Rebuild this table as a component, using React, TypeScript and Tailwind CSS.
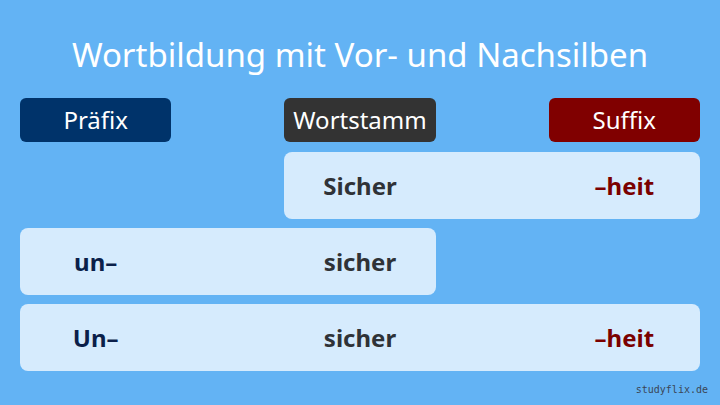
const font = { fontFamily: '"Noto Sans", "Open Sans", sans-serif' };

type Row = {
  start: 'col-start-1' | 'col-start-2';
  span: 'col-span-2' | 'col-span-3';
  cols: 'grid-cols-2' | 'grid-cols-3';
  words: { text: string; color: string }[];
};

const rows: Row[] = [
  {
    start: 'col-start-2',
    span: 'col-span-2',
    cols: 'grid-cols-2',
    words: [
      { text: 'Sicher', color: 'text-[#2f3237]' },
      { text: '–heit', color: 'text-[#7a0000]' },
    ],
  },
  {
    start: 'col-start-1',
    span: 'col-span-2',
    cols: 'grid-cols-2',
    words: [
      { text: 'un–', color: 'text-[#0b1f4a]' },
      { text: 'sicher', color: 'text-[#2f3237]' },
    ],
  },
  {
    start: 'col-start-1',
    span: 'col-span-3',
    cols: 'grid-cols-3',
    words: [
      { text: 'Un–', color: 'text-[#0b1f4a]' },
      { text: 'sicher', color: 'text-[#2f3237]' },
      { text: '–heit', color: 'text-[#7a0000]' },
    ],
  },
];

export default function App() {
  return (
    <div className="relative w-[720px] h-[405px] bg-[#63b3f4] overflow-hidden" style={font}>
      <h1 className="pt-[33px] h-[98px] text-center text-white text-[33px] leading-[44px]">
        Wortbildung mit Vor- und Nachsilben
      </h1>

      <div className="grid grid-cols-3 gap-x-[113px] gap-y-[9px] px-5">
        <div className="h-[44px] rounded-md bg-[#00336a] text-white text-[24px] flex items-center justify-center">
          Präfix
        </div>
        <div className="h-[44px] rounded-md bg-[#333333] text-white text-[24px] flex items-center justify-center">
          Wortstamm
        </div>
        <div className="h-[44px] rounded-md bg-[#800000] text-white text-[24px] flex items-center justify-center">
          Suffix
        </div>

        {rows.map((row, i) => (
          <div
            key={i}
            className={`${row.start} ${row.span} h-[67px] rounded-lg bg-[#d6ebfd] grid ${row.cols} gap-x-[113px] items-center ${i === 0 ? 'mt-px' : ''}`}
          >
            {row.words.map((w, j) => (
              <div key={j} className={`text-center text-[24px] font-bold ${w.color}`}>
                {w.text}
              </div>
            ))}
          </div>
        ))}
      </div>

      <div
        className="absolute right-[12px] bottom-[8px] text-[10px] text-[#3b4656]"
        style={{ fontFamily: '"DejaVu Sans Mono", monospace' }}
      >
        studyflix.de
      </div>
    </div>
  );
}
